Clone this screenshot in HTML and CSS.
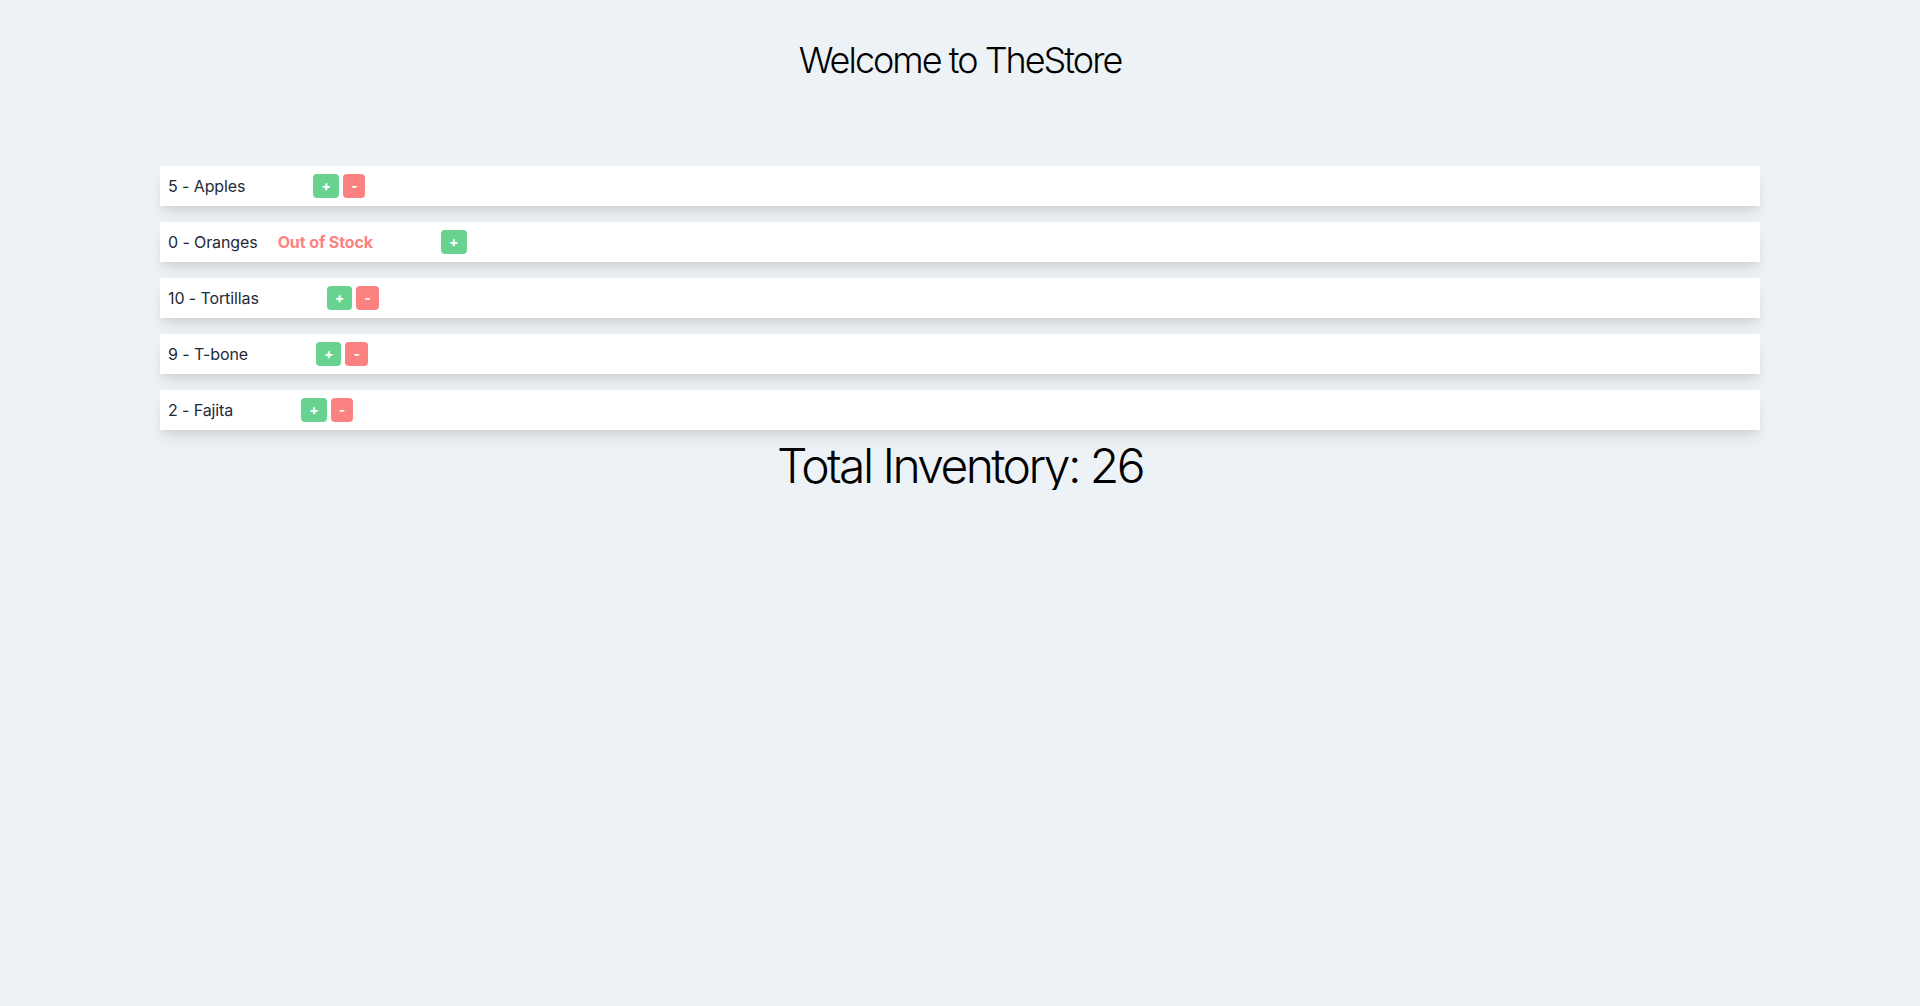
FILE: index.html
```html
<!DOCTYPE html>
<html lang="en">
<head>
<meta charset="utf-8">
<title>TheStore</title>
<link rel="stylesheet" href="styles.css">
</head>
<body>
  <header class="header">
    <h1 class="title">Welcome to TheStore</h1>
  </header>
  <main class="container">
    <ul class="list">
      <li class="row">
        <span class="name">5 - Apples</span>
        <div class="actions">
          <button class="btn btn-add">+</button>
          <button class="btn btn-remove">-</button>
        </div>
      </li>
      <li class="row">
        <span class="name">0 - Oranges</span>
        <span class="out">Out of Stock</span>
        <div class="actions">
          <button class="btn btn-add">+</button>
        </div>
      </li>
      <li class="row">
        <span class="name">10 - Tortillas</span>
        <div class="actions">
          <button class="btn btn-add">+</button>
          <button class="btn btn-remove">-</button>
        </div>
      </li>
      <li class="row">
        <span class="name">9 - T-bone</span>
        <div class="actions">
          <button class="btn btn-add">+</button>
          <button class="btn btn-remove">-</button>
        </div>
      </li>
      <li class="row">
        <span class="name">2 - Fajita</span>
        <div class="actions">
          <button class="btn btn-add">+</button>
          <button class="btn btn-remove">-</button>
        </div>
      </li>
    </ul>
    <h2 class="total">Total Inventory: 26</h2>
  </main>
</body>
</html>
```
FILE: styles.css
```css
* { box-sizing: border-box; }
html, body {
  margin: 0;
  padding: 0;
  background: #edf2f7;
  font-family: Inter, "Noto Sans", "Liberation Sans", sans-serif;
  color: #000;
}
.header {
  padding-top: 40px;
  text-align: center;
}
.title {
  margin: 0;
  font-size: 36px;
  line-height: 40px;
  font-weight: 300;
  letter-spacing: -2px;
}
.container {
  width: 1600px;
  margin: 86px auto 0;
}
.list {
  list-style: none;
  margin: 0;
  padding: 0;
  display: flex;
  flex-direction: column;
  gap: 16px;
}
.row {
  height: 40px;
  background: #fff;
  display: flex;
  align-items: center;
  padding: 0 8px;
  box-shadow: 0 10px 15px -3px rgba(0,0,0,0.1), 0 4px 6px -2px rgba(0,0,0,0.05);
  font-size: 16px;
  color: #1f2937;
  letter-spacing: -0.1px;
}
.out {
  margin-left: 20px;
  color: #fc8181;
  font-weight: 700;
}
.actions {
  margin-left: 68px;
  display: flex;
  gap: 4px;
}
.btn {
  border: 0;
  border-radius: 4px;
  color: #fff;
  font-family: inherit;
  font-weight: 700;
  font-size: 14px;
  line-height: 20px;
  padding: 2px 8px;
  cursor: pointer;
}
.btn-add { background: #68d391; }
.btn-remove { background: #fc8181; }
.total {
  margin: 12px 0 0;
  text-align: center;
  font-size: 48px;
  line-height: 48px;
  font-weight: 300;
  letter-spacing: -2.6px;
}
```
